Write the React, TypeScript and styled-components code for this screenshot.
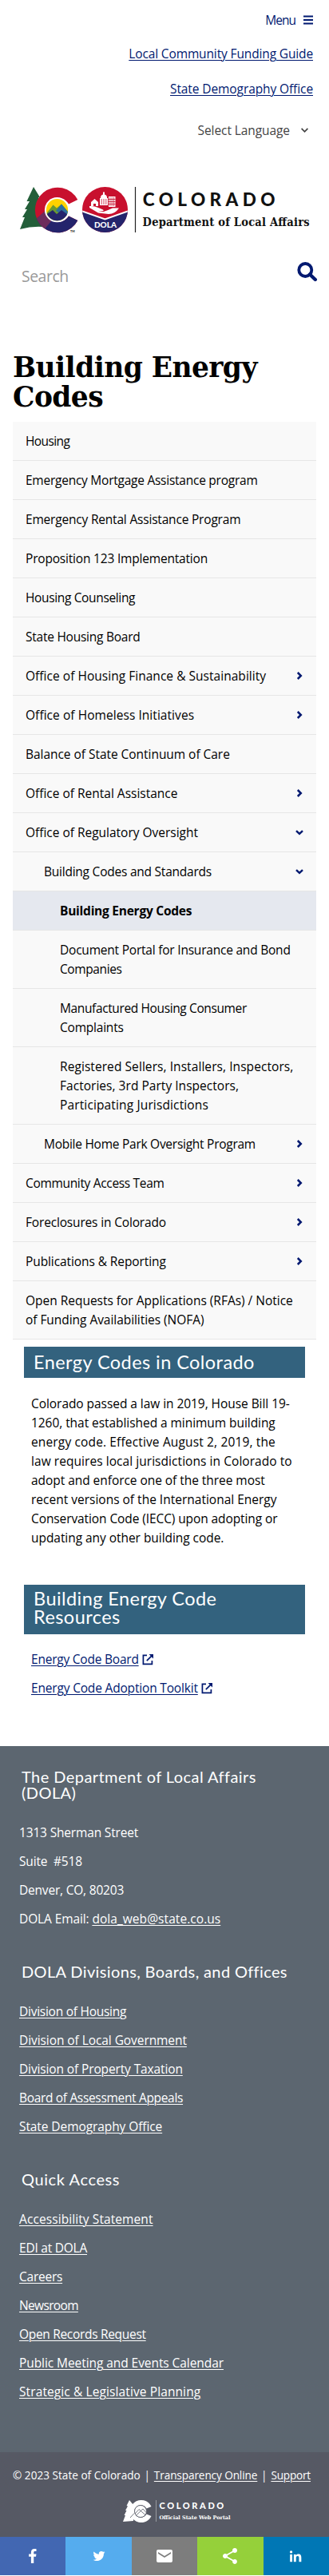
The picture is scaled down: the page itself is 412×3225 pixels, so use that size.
import React from 'react';
import styled, { createGlobalStyle, css } from 'styled-components';

const navy = '#001970';

const GlobalStyle = createGlobalStyle`
  body {
    margin: 0;
    background: #fff;
    color: #000;
    font: 400 15.5px/24px "Open Sans", "Noto Sans", sans-serif;
  }
  *, *::before, *::after { box-sizing: border-box; }
  svg { display: block; flex: none; }
`;

/* Tracking for a line of text, given its width in percent of the font's normal width. */
const tracking = (fit: number) => ((fit - 96.9) * 0.00516).toFixed(4);

/* One unbroken line of text. */
const Line = styled.span<{ fit: number }>`
  display: inline-block;
  white-space: pre;
  letter-spacing: ${(p) => tracking(p.fit)}em;
`;

const Link = styled.a<{ fit: number }>`
  display: inline-block;
  white-space: pre;
  color: inherit;
  letter-spacing: ${(p) => tracking(p.fit)}em;
  text-decoration: underline;
  text-decoration-thickness: 1px;
  text-underline-offset: 2px;
`;

const Page = styled.div`
  width: 412px;
  height: 3225px;
  overflow: hidden;
`;

/* ---------- header ---------- */

const Header = styled.header`
  display: flex;
  flex-direction: column;
  align-items: flex-end;
  padding: 13px 20px 0 24px;
  color: ${navy};
`;

const MenuButton = styled.div`
  display: flex;
  align-items: center;
  gap: 10px;
  margin-bottom: 18px;
`;

const HeaderLinks = styled.nav`
  display: flex;
  flex-direction: column;
  align-items: flex-end;
  gap: 20px;
`;

const LanguagePicker = styled.div`
  display: flex;
  align-items: center;
  gap: 14px;
  margin: 28px 6px 0 0;
  color: #444;
`;

const Brand = styled.div`
  margin-top: 54px;
  align-self: flex-start;
`;

const SearchBar = styled.div`
  display: flex;
  justify-content: space-between;
  align-items: flex-start;
  height: 31px;
  margin: 33px 14px 0 27px;
`;

const SearchHint = styled.div`
  padding-top: 4px;
  color: #999;
  font-size: 19.4px;
  line-height: 28px;
`;

const PageTitle = styled.h1`
  margin: 83px 0 13px 16px;
  font: 700 34.5px/36.5px "DejaVu Serif", serif;
  letter-spacing: -0.58px;
`;

/* ---------- section menu ---------- */

const Menu = styled.ul`
  margin: 0 16px;
  padding: 0;
  list-style: none;
`;

const indents = [16, 39, 59];

const MenuRow = styled.li<{ level: number; current?: boolean }>`
  display: flex;
  justify-content: space-between;
  align-items: center;
  padding: 12px 15px 12px ${(p) => indents[p.level]}px;
  border-bottom: 1px solid #e6e6e6;
  background: #f9f9f9;
  ${(p) =>
    p.current &&
    css`
      background: #e5e8ef;
      font-weight: 700;
    `}
`;

const MenuLabel = styled.div`
  display: flex;
  flex-direction: column;
`;

/* ---------- content ---------- */

const Content = styled.main`
  padding: 9px 30px 0;
`;

const Banner = styled.h2<{ top: number }>`
  display: flex;
  flex-direction: column;
  margin: 0;
  padding: ${(p) => p.top}px 12px ${(p) => 16 - p.top}px;
  background: #33627e;
  color: #fff;
  font: 400 23.5px/23px Lato, sans-serif;
  letter-spacing: 0.44px;
`;

const Paragraph = styled.p`
  display: flex;
  flex-direction: column;
  margin: 20px 9px 47px;
`;

const Resources = styled.div`
  display: flex;
  flex-direction: column;
  gap: 12px;
  margin: 19px 9px 61px;
  color: ${navy};
`;

const Resource = styled.div`
  display: flex;
  align-items: center;
  gap: 4px;
`;

/* ---------- footer ---------- */

const Footer = styled.footer`
  padding: 28px 24px 64px;
  background: #5c6670;
  color: #fff;
`;

const FooterTitle = styled.h3<{ spaced?: boolean; gap: number }>`
  margin: ${(p) => (p.spaced ? 44 : 0)}px 0 28px 3px;
  font: 400 20px/20px Lato, sans-serif;
  letter-spacing: ${(p) => p.gap}px;
`;

const FooterList = styled.div`
  display: flex;
  flex-direction: column;
  align-items: flex-start;
  gap: 12px;
`;

const Legal = styled.div`
  display: flex;
  flex-direction: column;
  align-items: center;
  height: 106px;
  padding: 18px 16px 0;
  background: #565964;
  color: #fff;
`;

const LegalLine = styled.div`
  display: flex;
  align-self: stretch;
  justify-content: space-between;
  margin: 0 7px 19px 0;
  font-size: 13.6px;
  line-height: 21px;
`;

const PortalMark = styled.div`
  padding-left: 31px;
`;

const ShareBar = styled.div`
  display: grid;
  grid-template-columns: repeat(5, 1fr);
  height: 48px;
`;

const ShareCell = styled.div<{ tint: string }>`
  display: flex;
  align-items: center;
  justify-content: center;
  background: ${(p) => p.tint};
`;

/* ---------- drawings ---------- */

const Angle = ({ open }: { open?: boolean }) => (
  <svg width="12" height="12" viewBox="0 0 12 12" fill="none" stroke={navy} strokeWidth="2.5">
    <path d={open ? 'M2 4.1 6 7.8 10 4.1' : 'M3.8 2 7.8 6 3.8 10'} />
  </svg>
);

const External = () => (
  <svg width="15" height="15" viewBox="0 0 15 15" fill="none" stroke={navy} strokeWidth="1.7">
    <path d="M6 2.4H1.4V13.4H12.4V9" />
    <path d="M5.8 9.2 12.4 2.6" />
    <path d="M8.6 1H14V6.4Z" fill={navy} stroke="none" />
  </svg>
);

const treePath =
  'M18 5 26 18 24 18 30 29 30 55 Q16 54 1 58 L7 43 4 43 10 33 7 33 13 23 9.500 23Z';

const BrandLogo = () => (
  <svg width="366" height="66" viewBox="0 0 366 66">
    <defs>
      <clipPath id="c-shape">
        <path d="M73.300 21A28.300 28.300 0 1 0 73.300 47L62 41.500A15 15 0 1 1 62 26.500Z" />
      </clipPath>
      <clipPath id="c-core">
        <circle cx="47.500" cy="33.700" r="13.600" />
      </clipPath>
      <clipPath id="dola">
        <circle cx="107.500" cy="33.500" r="28.500" />
      </clipPath>
    </defs>
    <path d={treePath} fill="#235e39" />
    <circle cx="47.500" cy="33.700" r="19" fill="#fff" />
    <g clipPath="url(#c-shape)">
      <rect x="18" y="4" width="60" height="60" fill="#c8102e" />
      <path d="M18 47 48 28 78 34V64H18Z" fill="#24246c" />
      <path d="M18 48 38 30 40 48 30 60 18 60Z" fill="#6d2c5c" />
    </g>
    <circle cx="47.500" cy="33.700" r="15.600" fill="#fff" />
    <g clipPath="url(#c-core)">
      <rect x="32" y="18" width="32" height="32" fill="#ffd200" />
      <path d="M32 41 42.500 27.500 47 31.500 53 26.500 64 39V50H32Z" fill="#6b9a2f" />
      <path d="M46 35 53 26.500 64 40 62 44Z" fill="#2e6f9e" />
      <path d="M32 41 42 34 47 39 53 34 64 42V50H32Z" fill="#24246c" />
    </g>
    <text x="64" y="61.500" fontSize="3.600" fontFamily="Lato" fontWeight="700">TM</text>
    <g clipPath="url(#dola)">
      <rect x="79" y="5" width="57" height="57" fill="#c8102e" />
      <path d="M79 35.500 107.500 45.500 136 35.500V62H79Z" fill="#24246c" />
      <path d="M79 35.500 107.500 45.500 136 35.500" fill="none" stroke="#fff" strokeWidth="2" />
    </g>
    <g fill="#fff">
      <path d="M90 24 94.500 20 99 24V29H96V26H93V29H90Z" />
      <path d="M101 28V19H102V17.500Q102.500 15 105 14.500V11.500H107V14.500Q109.500 15 110 17.500V19H111V28Z" />
      <path d="M112 17H120.500V30H112Z" />
      <path d="M88 29Q94 28.500 99 31L105 33.500Q107 35.500 103 35.200L98 34.800 105 36.200Q112 34 117 31.500L125 31.500Q120 39 112 39L99 37.500 88 31Z" />
    </g>
    <path d="M103.200 20V27M106 20V27M108.800 20V27M113.800 18V29M116.200 18V29M118.600 18V29M112 20.500H120.500M112 23.500H120.500M112 26.500H120.500" stroke="#c8102e" strokeWidth=".8" />
    <text x="94" y="55.800" fontSize="10" fontFamily="Lato" fontWeight="900" fill="#fff" textLength="28">DOLA</text>
    <path d="M145.500 5V62" stroke="#222" strokeWidth="1.200" />
    <text x="154.800" y="29.300" fontSize="22.500" fontFamily="Lato" fontWeight="900" fill="#111" letterSpacing="5.400">COLORADO</text>
    <text x="154.600" y="53.600" fontSize="14.500" fontFamily="DejaVu Serif Condensed" fontWeight="700" fill="#111" textLength="209">Department of Local Affairs</text>
  </svg>
);

const PortalLogo = () => (
  <svg width="138" height="34" viewBox="0 0 138 34" fill="#fff">
    <path d="M9 2 14 8V28L1 29 4 21 2.500 21 5.500 15 4 15 7 9.500 5.500 9Z" />
    <path d="M36.500 10A14 14 0 1 0 36.500 22L30.500 19.500A8 8 0 1 1 30.500 12.500Z" />
    <circle cx="23" cy="16" r="7.500" fill="#fff" stroke="#565964" strokeWidth=".8" />
    <path d="M16 19 21 13.500 29 20.500M17 21.500 26 13 30 17.500M10 24 15 18.500" fill="none" stroke="#565964" strokeWidth=".8" />
    <path d="M42.500 2V29" stroke="#a7a9af" strokeWidth=".8" />
    <text x="46.500" y="13.300" fontSize="11" fontFamily="Lato" fontWeight="900" letterSpacing="2.600">COLORADO</text>
    <text x="46.500" y="25.500" fontSize="6.500" fontFamily="DejaVu Serif" fontWeight="700" textLength="89">Official State Web Portal</text>
  </svg>
);

const shareIcons: { tint: string; size: number; path: string }[] = [
  {
    tint: '#4267b2',
    size: 20,
    path: 'M22.500 38V21.600H28L28.900 15.200H22.500V11.100C22.500 9.200 23 8 25.600 8H29V2.300C28.400 2.200 26.400 2 24 2 19.100 2 15.800 5 15.800 10.500V15.200H10.300V21.600H15.800V38Z',
  },
  {
    tint: '#55acee',
    size: 20,
    path: 'M31.500 11.700c1.300-.8 2.200-2 2.700-3.400-1.400.7-2.700 1.200-4 1.400-1.100-1.200-2.600-1.900-4.400-1.900-1.700 0-3.200.6-4.400 1.800-1.200 1.200-1.800 2.700-1.800 4.400 0 .5.1.9.2 1.300-5.100-.1-9.400-2.300-12.700-6.400-.6 1-.9 2.100-.9 3.100 0 2.200 1 3.900 2.800 5.200-1.100-.1-2-.4-2.800-.8 0 1.500.5 2.800 1.400 4 .9 1.100 2.100 1.800 3.500 2.100-.5.100-1 .2-1.600.2-.5 0-.9 0-1.100-.1.4 1.200 1.100 2.300 2.100 3 1.100.8 2.300 1.200 3.600 1.300-2.200 1.700-4.700 2.600-7.600 2.600-.7 0-1.200 0-1.500-.1 2.800 1.900 6 2.800 9.500 2.800 3.500 0 6.700-.9 9.400-2.700 2.800-1.800 4.800-4.100 6.100-6.700 1.300-2.600 1.900-5.300 1.900-8.100v-.8c1.300-.9 2.300-2 3.100-3.200-1.100.5-2.300.8-3.500 1z',
  },
  {
    tint: '#7d7d7d',
    size: 24,
    path: 'M33.400 13.100V11.700L20 20 6.700 11.700v3.300L20 23.400l13.400-8.400zM33.400 6.700c1.800 0 3.200 1.500 3.200 3.300v20c0 1.800-1.400 3.300-3.200 3.300H6.600c-1.800 0-3.200-1.500-3.200-3.300V10c0-1.800 1.400-3.300 3.200-3.300z',
  },
  {
    tint: '#95d03a',
    size: 24,
    path: 'M30 26.800c2.700 0 4.800 2.200 4.800 4.800s-2.100 5-4.800 5-4.800-2.300-4.800-5c0-.3 0-.7 0-1.100l-11.800-6.800c-.9.8-2.100 1.300-3.400 1.300-2.700 0-5-2.300-5-5s2.300-5 5-5c1.300 0 2.500.5 3.400 1.300l11.800-6.800c-.1-.4-.2-.8-.2-1.100 0-2.800 2.300-5 5-5s5 2.200 5 5-2.300 5-5 5c-1.300 0-2.500-.6-3.400-1.400l-11.800 6.800c.1.400.2.800.2 1.200s-.1.800-.2 1.200l11.900 6.800c.9-.7 2.100-1.200 3.300-1.200z',
  },
  {
    tint: '#0077b5',
    size: 21,
    path: 'M6 15H11.500V33H6ZM8.700 6.200A3.200 3.200 0 1 1 8.700 12.600 3.200 3.200 0 1 1 8.700 6.200ZM15 15H20.300V17.500C21.300 15.700 23.300 14.500 26 14.500 31.600 14.500 33 18 33 23V33H27.500V24C27.500 21.500 27.200 19.200 24.300 19.200 21.300 19.200 20.500 21.400 20.500 24V33H15Z',
  },
];

/* ---------- data ---------- */

type Text = [string, number];

interface Item {
  lines: Text[];
  level?: number;
  state?: 'closed' | 'open';
  current?: boolean;
}

const menu: Item[] = [
  { lines: [['Housing', 89.3]] },
  { lines: [['Emergency Mortgage Assistance program', 93.8]] },
  { lines: [['Emergency Rental Assistance Program', 94.5]] },
  { lines: [['Proposition 123 Implementation', 94.5]] },
  { lines: [['Housing Counseling', 92.5]] },
  { lines: [['State Housing Board', 93.8]] },
  { lines: [['Office of Housing Finance & Sustainability', 97.3]], state: 'closed' },
  { lines: [['Office of Homeless Initiatives', 97.6]], state: 'closed' },
  { lines: [['Balance of State Continuum of Care', 96.4]] },
  { lines: [['Office of Rental Assistance', 96.8]], state: 'closed' },
  { lines: [['Office of Regulatory Oversight', 96.7]], state: 'open' },
  { lines: [['Building Codes and Standards', 94]], level: 1, state: 'open' },
  { lines: [['Building Energy Codes', 93.8]], level: 2, current: true },
  { lines: [['Document Portal for Insurance and Bond', 94.2], ['Companies', 92]], level: 2 },
  { lines: [['Manufactured Housing Consumer', 92.2], ['Complaints', 94.2]], level: 2 },
  {
    lines: [
      ['Registered Sellers, Installers, Inspectors,', 97.8],
      ['Factories, 3rd Party Inspectors,', 97.3],
      ['Participating Jurisdictions', 98.6],
    ],
    level: 2,
  },
  { lines: [['Mobile Home Park Oversight Program', 93.6]], level: 1, state: 'closed' },
  { lines: [['Community Access Team', 92.8]], state: 'closed' },
  { lines: [['Foreclosures in Colorado', 94.8]], state: 'closed' },
  { lines: [['Publications & Reporting', 95.8]], state: 'closed' },
  {
    lines: [
      ['Open Requests for Applications (RFAs) / Notice', 96.7],
      ['of Funding Availabilities (NOFA)', 96.3],
    ],
  },
];

const body: Text[] = [
  ['Colorado passed a law in 2019, House Bill 19-', 96.2],
  ['1260, that established a minimum building', 96.2],
  ['energy code. Effective August 2, 2019, the', 98.7],
  ['law requires local jurisdictions in Colorado to', 97.6],
  ['adopt and enforce one of the three most', 96.3],
  ['recent versions of the International Energy', 96.9],
  ['Conservation Code (IECC) upon adopting or', 95.7],
  ['updating any other building code.', 96.3],
];

const divisions: Text[] = [
  ['Division of Housing', 93.7],
  ['Division of Local Government', 96],
  ['Division of Property Taxation', 95.3],
  ['Board of Assessment Appeals', 92.8],
  ['State Demography Office', 95.8],
];

const quickAccess: Text[] = [
  ['Accessibility Statement', 98],
  ['EDI at DOLA', 94],
  ['Careers', 93.8],
  ['Newsroom', 88.7],
  ['Open Records Request', 93],
  ['Public Meeting and Events Calendar', 96],
  ['Strategic & Legislative Planning', 98.2],
];

const Lines = ({ of }: { of: Text[] }) => (
  <>
    {of.map(([text, fit]) => (
      <Line key={text} fit={fit}>{text}</Line>
    ))}
  </>
);

const Links = ({ of }: { of: Text[] }) => (
  <>
    {of.map(([text, fit]) => (
      <Link key={text} fit={fit}>{text}</Link>
    ))}
  </>
);

export default function App() {
  return (
    <Page>
      <GlobalStyle />
      <Header>
        <MenuButton>
          <Line fit={85}>Menu</Line>
          <svg width="12" height="12" viewBox="0 0 12 12" fill={navy}>
            <path d="M0 .5H12V2.500H0ZM0 5H12V7H0ZM0 9.500H12V11.500H0Z" />
          </svg>
        </MenuButton>
        <HeaderLinks>
          <Link fit={95.2}>Local Community Funding Guide</Link>
          <Link fit={95.7}>State Demography Office</Link>
        </HeaderLinks>
        <LanguagePicker>
          <Line fit={95.9}>Select Language</Line>
          <svg width="9" height="8" viewBox="0 0 9 8" fill="none" stroke="#444" strokeWidth="1.7">
            <path d="M.6 1.800 4.500 5.800 8.400 1.800" />
          </svg>
        </LanguagePicker>
        <Brand>
          <BrandLogo />
        </Brand>
      </Header>
      <SearchBar>
        <SearchHint><Line fit={92.4}>Search</Line></SearchHint>
        <svg width="26" height="25" viewBox="0 0 26 25" fill="none" stroke={navy}>
          <circle cx="10.300" cy="10" r="8" strokeWidth="3.800" />
          <path d="M16 15.500 22.800 22" strokeWidth="4.400" strokeLinecap="round" />
        </svg>
      </SearchBar>
      <PageTitle>Building Energy<br />Codes</PageTitle>
      <Menu>
        {menu.map((item) => (
          <MenuRow key={item.lines[0][0]} level={item.level ?? 0} current={item.current}>
            <MenuLabel><Lines of={item.lines} /></MenuLabel>
            {item.state && <Angle open={item.state === 'open'} />}
          </MenuRow>
        ))}
      </Menu>
      <Content>
        <Banner top={8}>Energy Codes in Colorado</Banner>
        <Paragraph><Lines of={body} /></Paragraph>
        <Banner top={6}>
          <span>Building Energy Code</span>
          <span>Resources</span>
        </Banner>
        <Resources>
          <Resource><Link fit={94.1}>Energy Code Board</Link><External /></Resource>
          <Resource><Link fit={94.7}>Energy Code Adoption Toolkit</Link><External /></Resource>
        </Resources>
      </Content>
      <Footer>
        <FooterTitle gap={0.44}>The Department of Local Affairs<br />(DOLA)</FooterTitle>
        <FooterList>
          <Line fit={94.8}>1313 Sherman Street</Line>
          <Line fit={94.7}>{'Suite  #518'}</Line>
          <Line fit={94.4}>Denver, CO, 80203</Line>
          <div>
            <Line fit={95.5}>{'DOLA Email: '}</Line>
            <Link fit={97.6}>dola_web@state.co.us</Link>
          </div>
        </FooterList>
        <FooterTitle spaced gap={0.37}>DOLA Divisions, Boards, and Offices</FooterTitle>
        <FooterList><Links of={divisions} /></FooterList>
        <FooterTitle spaced gap={0.6}>Quick Access</FooterTitle>
        <FooterList><Links of={quickAccess} /></FooterList>
      </Footer>
      <Legal>
        <LegalLine>
          <Line fit={97}>© 2023 State of Colorado</Line>
          <span>|</span>
          <Link fit={95.4}>Transparency Online</Link>
          <span>|</span>
          <Link fit={94}>Support</Link>
        </LegalLine>
        <PortalMark><PortalLogo /></PortalMark>
      </Legal>
      <ShareBar>
        {shareIcons.map((icon) => (
          <ShareCell key={icon.tint} tint={icon.tint}>
            <svg width={icon.size} height={icon.size} viewBox="0 0 40 40" fill="#fff">
              <path d={icon.path} />
            </svg>
          </ShareCell>
        ))}
      </ShareBar>
    </Page>
  );
}
